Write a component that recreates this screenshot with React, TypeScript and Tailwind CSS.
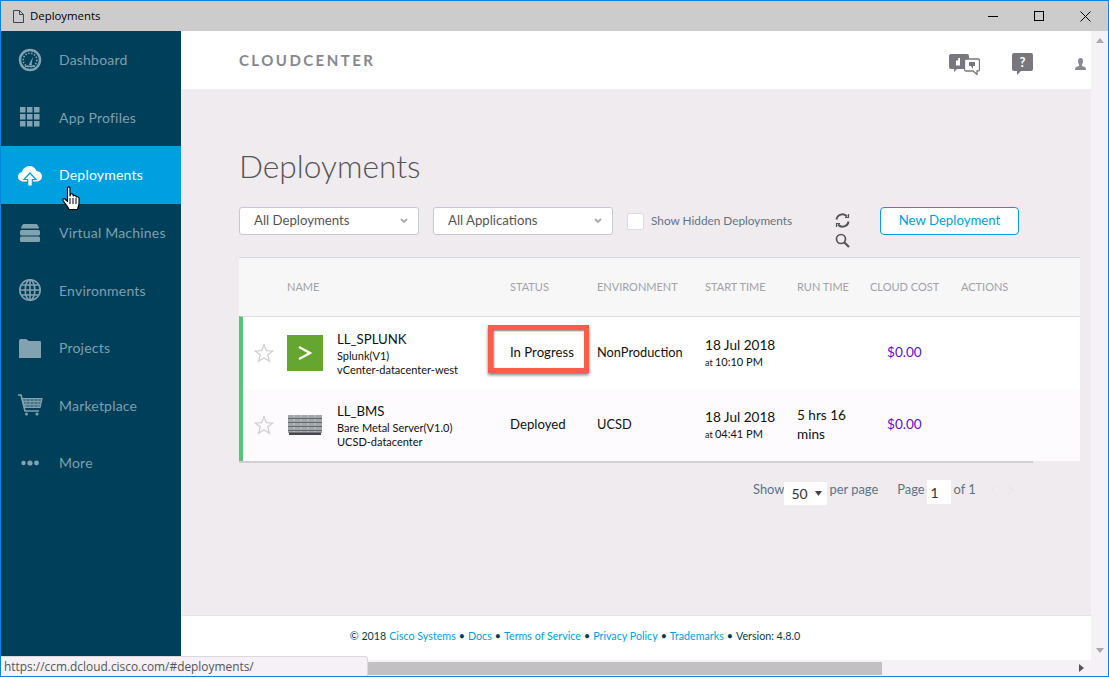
import React from "react";

const icon = "#83a2b0";

const GaugeIcon = () => (
  <svg width="24" height="24" viewBox="0 0 24 24" fill="none">
    <circle cx="12" cy="12" r="10" stroke={icon} strokeWidth="2.400" />
    <circle cx="12" cy="12" r="6.800" stroke={icon} strokeWidth="1.600" strokeDasharray="1.500 1.500" />
    <path d="M11 17h3l-.3-2 1.600-6.500-3.600 6.200z" fill={icon} />
    <rect x="7" y="17.500" width="10" height="1.500" fill={icon} />
  </svg>
);

const GridIcon = () => (
  <svg width="22" height="22" viewBox="0 0 22 22" fill={icon}>
    {[1, 8, 15].flatMap((y) =>
      [1, 8, 15].map((x) => <rect key={`${x}-${y}`} x={x} y={y} width="5.500" height="5.500" />)
    )}
  </svg>
);

const CloudIcon = () => (
  <svg width="26" height="24" viewBox="0 0 26 24" fill="none">
    <path
      d="M6.500 18.500C3.500 18.500 1 16.500 1 13.700c0-2.400 1.700-4.300 4-4.700C5.800 5.500 9 3 12.500 3c3.400 0 6 2 7 5 3 .2 5.500 2.400 5.500 5.200s-2.300 5.300-5 5.300z"
      fill="#fff"
    />
    <path d="M13 10l-6 6.500h3.700V23h4.600v-6.500H19z" fill="#fff" stroke="#009fdf" strokeWidth="1.200" />
  </svg>
);

const StackIcon = () => (
  <svg width="22" height="18" viewBox="0 0 22 18" fill={icon}>
    <path d="M5 0h12q2 0 3 4.500H2Q3 0 5 0z" />
    <rect x="1" y="6" width="20" height="5.500" rx="1.500" />
    <rect x="1" y="12.500" width="20" height="5.500" rx="1.500" />
  </svg>
);

const GlobeIcon = () => (
  <svg width="24" height="24" viewBox="0 0 24 24" fill="none" stroke={icon} strokeWidth="1.600">
    <circle cx="12" cy="12" r="10.200" />
    <ellipse cx="12" cy="12" rx="4.800" ry="10.200" />
    <path d="M12 2v20M2 12h20M3.500 7h17M3.500 17h17" />
  </svg>
);

const FolderIcon = () => (
  <svg width="22" height="20" viewBox="0 0 22 20" fill={icon}>
    <path d="M0 20V3q0-1 1-2h6q1 0 2 1.500L10 3h11q1 0 1 1v16z" />
  </svg>
);

const CartIcon = () => (
  <svg width="26" height="22" viewBox="0 0 26 22" fill="none" stroke={icon}>
    <path d="M1 1h3l4 16h14" strokeWidth="1.600" />
    <path d="M5 4.500h20l-2 9H7.500z" fill={icon} fillOpacity="0.55" strokeWidth="1.200" />
    <path d="M9 5v8M13 5v8M17 5v8M21 5v8M6 7.500h18M6.500 10.500h17" strokeWidth="0.800" />
    <circle cx="9.500" cy="20" r="1.500" fill={icon} stroke="none" />
    <circle cx="20" cy="20" r="1.500" fill={icon} stroke="none" />
  </svg>
);

const MoreIcon = () => (
  <svg width="20" height="6" viewBox="0 0 20 6" fill={icon}>
    <circle cx="3.500" cy="3" r="2.200" />
    <circle cx="10" cy="3" r="2.600" />
    <circle cx="16.500" cy="3" r="2.400" />
  </svg>
);

const HandCursor = () => (
  <svg width="19" height="25" viewBox="0 0 19 25">
    <path
      d="M5.500 2c0-1.500 2.500-1.500 2.500 0v8l.5-2c1.500-.5 2.500 0 2.500 1l.5 1c.5-1 2.500-1 2.500.5l.5.5c1-.5 2.500 0 2.500 1.500v5c0 2-1 3-1.500 6H7c-1-3.500-4-5.500-6-9-.5-1.500 1-2.500 2-1.500l2.500 2.500z"
      fill="#fff"
      stroke="#000"
      strokeWidth="1.100"
      strokeLinejoin="round"
    />
    <path d="M8 12v6M11 12v6M14 12v6" stroke="#000" strokeWidth="1" />
  </svg>
);

const Star = () => (
  <svg width="20" height="20" viewBox="0 0 24 24" fill="none" stroke="#cfcfcf" strokeWidth="1.500">
    <path d="M12 2l2.800 7.200 7.700.4-6 4.900 2 7.500-6.500-4.200-6.500 4.200 2-7.500-6-4.900 7.700-.4z" />
  </svg>
);

const navItems = [
  { label: "Dashboard", icon: <GaugeIcon /> },
  { label: "App Profiles", icon: <GridIcon /> },
  { label: "Deployments", icon: <CloudIcon />, active: true },
  { label: "Virtual Machines", icon: <StackIcon /> },
  { label: "Environments", icon: <GlobeIcon /> },
  { label: "Projects", icon: <FolderIcon /> },
  { label: "Marketplace", icon: <CartIcon /> },
  { label: "More", icon: <MoreIcon /> },
];

const Sidebar = () => (
  <aside className="relative w-[180px] shrink-0 bg-[#003f5a]">
    {navItems.map((item) => (
      <div
        key={item.label}
        className={
          item.active
            ? "relative flex h-[57.6px] items-center bg-[#009fdf] text-white"
            : "flex h-[57.6px] items-center text-[#7f9fad]"
        }
      >
        <span className="flex w-[58px] shrink-0 justify-center">{item.icon}</span>
        <span className="text-[14px] tracking-[0.2px]">{item.label}</span>
        {item.active && (
          <span className="absolute left-[61px] top-[40px] z-10">
            <HandCursor />
          </span>
        )}
      </div>
    ))}
  </aside>
);

const SelectBox = ({ label }: { label: string }) => (
  <div className="flex h-[28px] w-[180px] items-center justify-between rounded-[3px] border border-[#c9c7d2] bg-white pl-[14px] pr-[10px] text-[13.2px] text-[#555]">
    <span>{label}</span>
    <svg width="8" height="6" viewBox="0 0 8 6" fill="none" stroke="#aaa" strokeWidth="1.800">
      <path d="M1 1l3 3 3-3" />
    </svg>
  </div>
);

const gridCols = "grid grid-cols-[44px_223px_87px_108px_92px_73px_91px_119px]";
const headCell = "text-[11px] uppercase text-[#a2a2aa]";

const rows = [
  {
    name: "LL_SPLUNK",
    app: "Splunk(V1)",
    cloud: "vCenter-datacenter-west",
    status: "In Progress",
    env: "NonProduction",
    date: "18 Jul 2018",
    time: "10:10 PM",
    run: "",
    bg: "bg-white",
  },
  {
    name: "LL_BMS",
    app: "Bare Metal Server(V1.0)",
    cloud: "UCSD-datacenter",
    status: "Deployed",
    env: "UCSD",
    date: "18 Jul 2018",
    time: "04:41 PM",
    run: "5 hrs 16 mins",
    bg: "bg-[#fdfbfe]",
  },
];

const AppLogo = ({ splunk }: { splunk: boolean }) =>
  splunk ? (
    <div className="flex h-[36px] w-[36px] items-center justify-center bg-[#65a630]">
      <svg width="16" height="18" viewBox="0 0 16 18" fill="none" stroke="#fff" strokeWidth="2.400">
        <path d="M2 3l11 6-11 6" />
      </svg>
    </div>
  ) : (
    <svg width="34" height="20" viewBox="0 0 34 20">
      <rect x="0" y="0" width="34" height="18" fill="#a2a6aa" />
      <path d="M0 3.500h34M0 7.500h34M0 11.500h34M0 15.500h34" stroke="#63686c" strokeWidth="1" />
      <path d="M6 0v17M13 0v17M20 0v17M27 0v17" stroke="#c6c9cc" strokeWidth="1" strokeDasharray="2 2" />
      <rect x="1" y="17.500" width="32" height="2.500" fill="#44484c" />
    </svg>
  );

const Table = () => (
  <div className="relative mt-[22px] w-[841px]">
    <div className={`${gridCols} h-[59px] items-center border-t border-[#d8d6dc] bg-[#f7f7f7] pl-[4px]`}>
      <span />
      <span className={headCell}>Name</span>
      <span className={headCell}>Status</span>
      <span className={headCell}>Environment</span>
      <span className={headCell}>Start Time</span>
      <span className={headCell}>Run Time</span>
      <span className={headCell}>Cloud Cost</span>
      <span className={headCell}>Actions</span>
    </div>
    <div className="border-l-[4px] border-t border-l-[#58c574] border-t-[#e2e0e4]">
      {rows.map((r) => (
        <div key={r.name} className={`${gridCols} h-[72px] items-center ${r.bg}`}>
          <span className="pl-[11px]">
            <Star />
          </span>
          <div className="flex items-center gap-[14px]">
            <div className="flex w-[36px] justify-center">
              <AppLogo splunk={r.name === "LL_SPLUNK"} />
            </div>
            <div className="text-[#111]">
              <div className="text-[13.200px] leading-[20px]">{r.name}</div>
              <div className="text-[11px] leading-[14px]">{r.app}</div>
              <div className="text-[11px] leading-[14px]">{r.cloud}</div>
            </div>
          </div>
          <span className="text-[13.200px] text-[#111]">{r.status}</span>
          <span className="text-[12.800px] text-[#111]">{r.env}</span>
          <div className="text-[#111]">
            <div className="text-[13.600px] leading-[18px]">{r.date}</div>
            <div className="text-[11px] leading-[15px]">
              <span className="text-[9px]">at </span>
              {r.time}
            </div>
          </div>
          <span className="w-[62px] text-[13.600px] leading-[19px] text-[#111]">{r.run}</span>
          <span className="pb-[2px] pl-[17px] text-[13.600px] text-[#5c0fc4]">$0.00</span>
          <span />
        </div>
      ))}
    </div>
    <div className="h-[2px] w-[794px] bg-[#d0ced2]" />
    {/* red callout drawn on top of the screenshot */}
    <div className="absolute left-[249px] top-[68px] h-[48px] w-[101px] border-[5px] border-[#ff5a4e] shadow-[0_2px_3px_0_rgba(0,0,0,0.5),inset_1px_1px_2px_rgba(0,0,0,0.5)]" />
  </div>
);

const Pager = () => {
  const label = "pb-[4px]";
  return (
    <div className="mt-[16px] flex h-[26px] w-[841px] items-center text-[12.900px] text-[#5b7485]">
      <span className={`ml-[514px] ${label}`}>Show</span>
      <span className="ml-[0px] mt-[2px] flex h-[23px] w-[43px] items-center justify-between bg-white pl-[7px] pr-[5px] text-[14px] text-[#333]">
        50
        <svg width="7" height="5" viewBox="0 0 7 5" fill="#444">
          <path d="M0 0h7L3.500 5z" />
        </svg>
      </span>
      <span className={`ml-[2px] ${label}`}>per page</span>
      <span className={`ml-[19px] ${label}`}>Page</span>
      <span className="ml-[1px] flex h-[26px] w-[26px] items-center border border-[#eeeeee] bg-white pl-[4px] text-[14px] text-[#333]">1</span>
      <span className={`ml-[2px] ${label}`}>of 1</span>
      <svg className="mb-[4px] ml-[14px]" width="7" height="10" viewBox="0 0 7 10" fill="none" stroke="#e5e4e7" strokeWidth="1">
        <path d="M6 1L1.500 5 6 9" />
      </svg>
      <svg className="mb-[4px] ml-[10px]" width="7" height="10" viewBox="0 0 7 10" fill="none" stroke="#e5e4e7" strokeWidth="1">
        <path d="M1 1l4.500 4L1 9" />
      </svg>
    </div>
  );
};

const Header = () => (
  <header className="flex h-[58px] shrink-0 items-center bg-white pl-[58px] pr-[5px]">
    <span className="text-[15px] font-bold tracking-[2.450px] text-[#87878c]">CLOUDCENTER</span>
    <div className="ml-auto mt-[8px] flex items-center">
      <svg width="31" height="21" viewBox="0 0 31 21">
        <path d="M2 0h16q2 0 2 2v11q0 2-2 2H8l-3 3v-3H2q-2 0-2-2V2q0-2 2-2z" fill="#77777d" />
        <path d="M17 5h12q1.500 0 1.500 1.500v9q0 1.500-1.500 1.500h-1v3.500L24 17h-7q-1.500 0-1.500-1.500v-9Q15.500 5 17 5z" fill="#fff" stroke="#77777d" strokeWidth="1.300" />
        <path d="M7 6.500h2.200V4H11v7.500H7z" fill="#fff" />
        <path d="M20 8h6v4h-2v3l-2-3h-2z" fill="#77777d" />
      </svg>
      <svg className="ml-[32px]" width="21" height="22" viewBox="0 0 21 22">
        <path d="M2 0h17q2 0 2 2v14q0 2-2 2H9l-4 4v-4H2q-2 0-2-2V2q0-2 2-2z" fill="#77777d" />
        <text x="10.500" y="14" textAnchor="middle" fontSize="13" fontWeight="700" fill="#fff" fontFamily="Lato, sans-serif">?</text>
      </svg>
      <svg className="ml-[42px]" width="11" height="12" viewBox="0 0 11 12" fill="#8a8a90">
        <path d="M3 3q0-3 2.500-3T8 3q0 2-1 3.500V8l3 1q1 .5 1 3H0q0-2.500 1-3l3-1V6.500Q3 5 3 3z" />
      </svg>
    </div>
  </header>
);

const Footer = () => {
  const link = "text-[#009fdf]";
  return (
    <footer className="flex h-[45px] shrink-0 items-center justify-center border-t border-[#e6e4e8] bg-white pb-[3px] pr-[122px] text-[10.700px] text-[#073b50]">
      <span>© 2018 </span>
      <span className={`ml-[3px] ${link}`}>Cisco Systems</span>
      <span className="mx-[3px]">•</span>
      <span className={link}>Docs</span>
      <span className="mx-[3px]">•</span>
      <span className={link}>Terms of Service</span>
      <span className="mx-[3px]">•</span>
      <span className={link}>Privacy Policy</span>
      <span className="mx-[3px]">•</span>
      <span className={link}>Trademarks</span>
      <span className="mx-[3px]">•</span>
      <span>Version: 4.8.0</span>
    </footer>
  );
};

export default function App() {
  return (
    <div
      className="relative flex h-[677px] w-[1109px] flex-col overflow-hidden border border-[#0a84e0] bg-[#f5f1f6]"
      style={{ fontFamily: "Lato, sans-serif" }}
    >
      {/* window title bar */}
      <div className="flex h-[30px] shrink-0 items-center bg-[#cccccc] pl-[12px] text-black">
        <svg width="11" height="13" viewBox="0 0 11 13" fill="none" stroke="#444">
          <path d="M.5.500h6l4 4v8H.5zM6.500.500v4h4" />
        </svg>
        <span className="ml-[6px] font-['Open_Sans',sans-serif] text-[11.400px]">Deployments</span>
        <div className="ml-auto flex items-center">
          <svg width="10" height="10" viewBox="0 0 10 10" stroke="#000">
            <path d="M0 5.500h10" />
          </svg>
          <svg className="ml-[36px]" width="10" height="10" viewBox="0 0 10 10" fill="none" stroke="#000">
            <rect x=".5" y=".5" width="9" height="9" />
          </svg>
          <svg className="ml-[36px] mr-[17px]" width="11" height="11" viewBox="0 0 11 11" stroke="#000">
            <path d="M.5.500l10 10M10.500.500l-10 10" />
          </svg>
        </div>
      </div>

      <div className="flex min-h-0 flex-1">
        <Sidebar />
        <div className="flex min-w-0 flex-1 flex-col">
          <div className="flex min-h-0 flex-1">
            <div className="flex min-w-0 flex-1 flex-col">
              <Header />
              <main className="flex-1 bg-[#efebef] pl-[58px]">
                <h1 className="mt-[55px] text-[31.700px] font-light leading-[44px] text-[#555]">Deployments</h1>
                <div className="mt-[19px] flex h-[28px] w-[780px] items-center">
                  <SelectBox label="All Deployments" />
                  <div className="ml-[14px]">
                    <SelectBox label="All Applications" />
                  </div>
                  <span className="ml-[14px] h-[17px] w-[17px] rounded-[2px] border border-[#dddbdf] bg-white" />
                  <span className="ml-[7px] pb-[1px] text-[11.800px] text-[#5f7484]">Show Hidden Deployments</span>
                  <div className="ml-[43px] mt-[18px] flex flex-col items-center gap-[5px]">
                    <svg width="15" height="15" viewBox="0 0 15 15" fill="none" stroke="#555" strokeWidth="2">
                      <path d="M1.500 6.500a6 6 0 0 1 10.500-3M13.500 8.500a6 6 0 0 1-10.500 3" />
                      <path d="M13.500 1v3.500H10M1.500 14v-3.500H5" strokeWidth="1.200" />
                    </svg>
                    <svg width="15" height="15" viewBox="0 0 15 15" fill="none" stroke="#555" strokeWidth="1.700">
                      <circle cx="6" cy="6" r="4.500" />
                      <path d="M9.500 9.500l4.500 4.500" strokeWidth="2.200" />
                    </svg>
                  </div>
                  <div className="ml-auto flex h-[28px] w-[139px] items-center justify-center rounded-[4px] border border-[#009fdf] bg-white pb-[1px] text-[13.200px] text-[#009fdf]">
                    New Deployment
                  </div>
                </div>
                <Table />
                <Pager />
              </main>
              <Footer />
            </div>
            {/* vertical scrollbar */}
            <div className="flex w-[17px] shrink-0 flex-col items-center justify-between py-[7px]">
              <svg width="8" height="5" viewBox="0 0 8 5" fill="#a8a8a8">
                <path d="M4 0l4 5H0z" />
              </svg>
              <svg width="8" height="5" viewBox="0 0 8 5" fill="#a8a8a8">
                <path d="M0 0h8L4 5z" />
              </svg>
            </div>
          </div>
          {/* horizontal scrollbar */}
          <div className="flex h-[16px] shrink-0 items-center">
            <div className="h-[13px] w-[701px] bg-[#c2c0c3]" />
            <svg className="ml-[197px]" width="5" height="8" viewBox="0 0 5 8" fill="#555">
              <path d="M0 0l5 4-5 4z" />
            </svg>
          </div>
        </div>
      </div>

      {/* status bubble over the bottom left corner */}
      <div className="absolute bottom-0 left-0 flex h-[20px] w-[367px] items-center rounded-tr-[3px] border-r border-t border-[#dad8dc] bg-[#f5f1f6] pl-[3px] font-['Open_Sans',sans-serif] text-[11.900px] text-[#555]">
        https://ccm.dcloud.cisco.com/#deployments/
      </div>
    </div>
  );
}
